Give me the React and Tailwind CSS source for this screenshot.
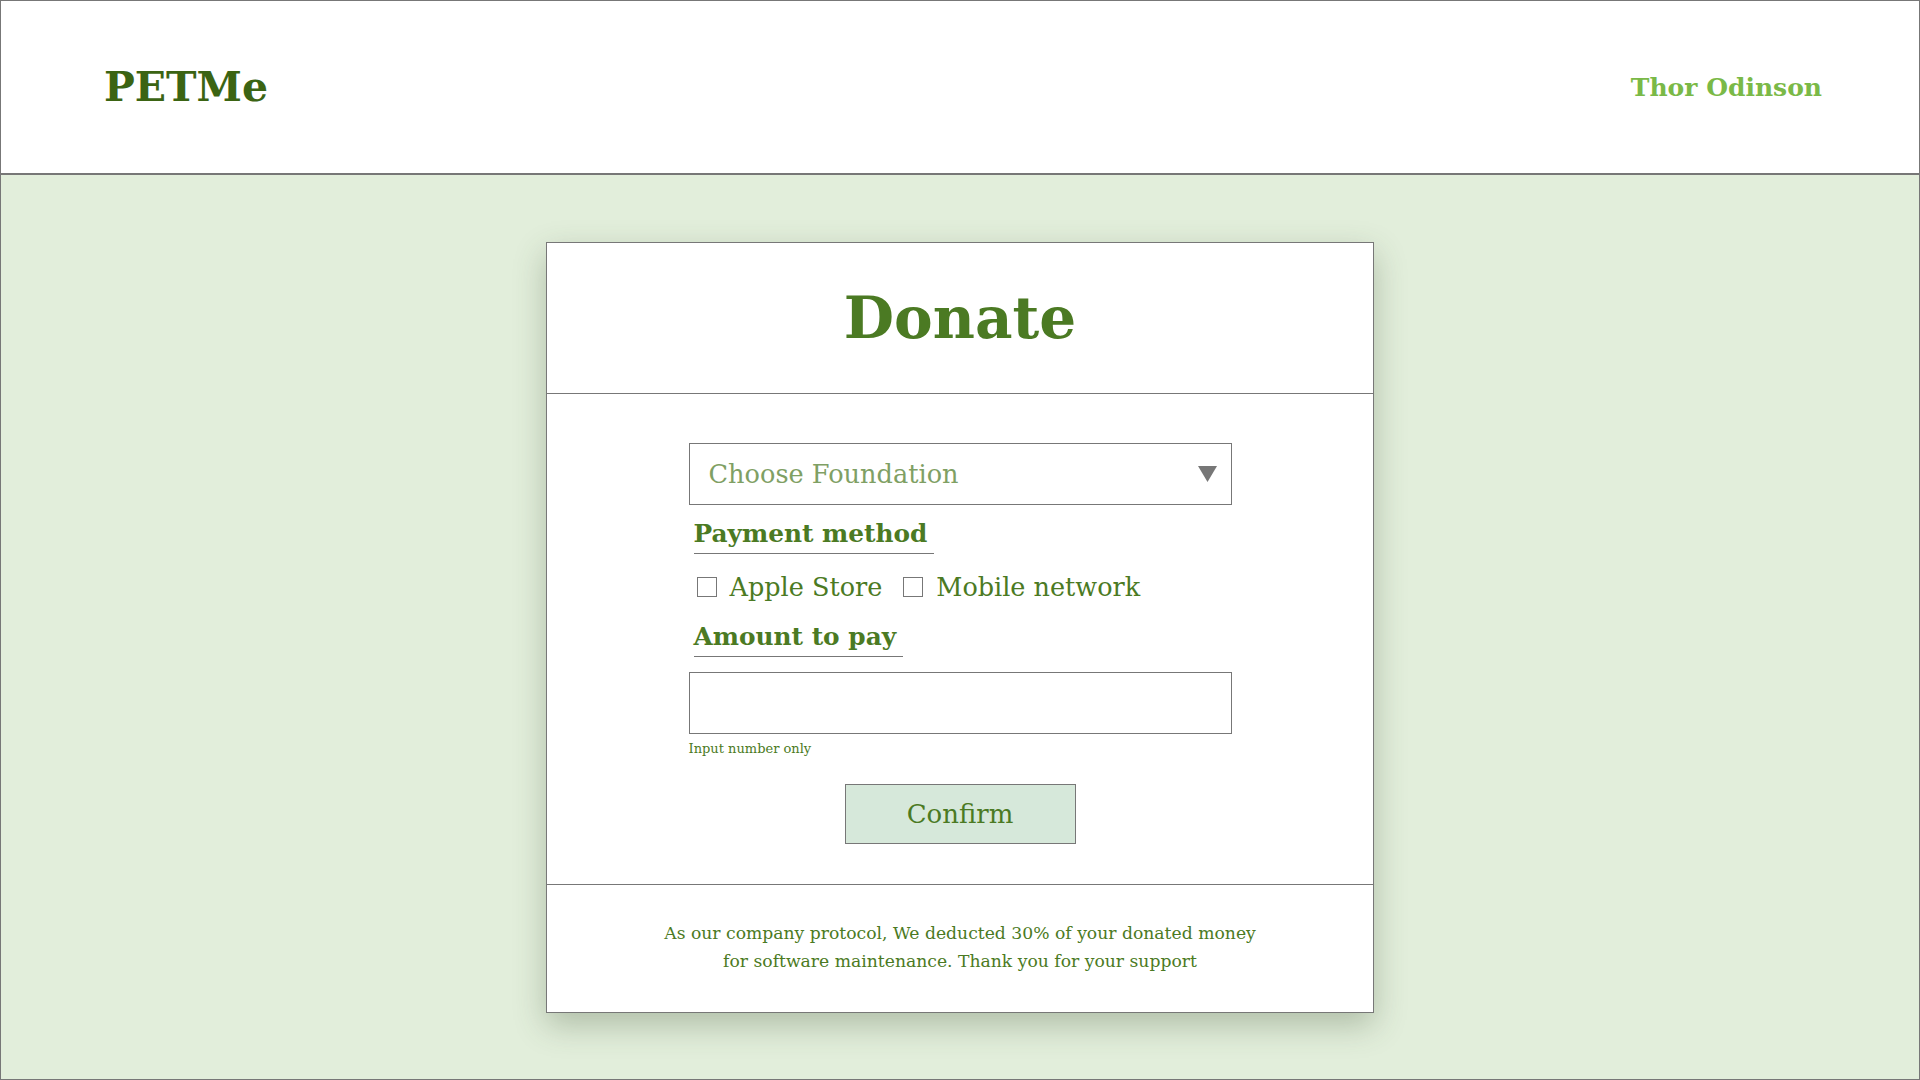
import { useState } from "react";

const serif = "font-['DejaVu_Serif','Liberation_Serif',serif]";

function CheckOption({ label, checked, onToggle }) {
  return (
    <label className="flex items-center gap-[13px] cursor-pointer">
      <span
        onClick={onToggle}
        className="w-[20px] h-[20px] border border-[#777] bg-white flex items-center justify-center"
      >
        {checked && <span className="w-[12px] h-[12px] bg-[#4b7a23]" />}
      </span>
      <span className="text-[25.5px] leading-[34px] text-[#4b7a23]">{label}</span>
    </label>
  );
}

function SectionLabel({ children }) {
  return (
    <div className="self-start ml-[5px] pr-[7px] pb-[2px] border-b border-[#777] text-[24.8px] leading-[34px] font-bold text-[#4b7a23]">
      {children}
    </div>
  );
}

export default function App() {
  const [apple, setApple] = useState(false);
  const [mobile, setMobile] = useState(false);
  const [amount, setAmount] = useState("");

  return (
    <div className={`${serif} w-full h-screen border border-[#777] bg-[#e2eedb] flex flex-col overflow-hidden`}>
      {/* Header */}
      <header className="h-[174px] shrink-0 bg-white border-b-2 border-[#777] flex items-center justify-between pl-[103px] pr-[97px]">
        <div className="text-[41px] font-bold text-[#3b6413] leading-none">PETMe</div>
        <div className="text-[25px] font-bold text-[#7ab947] leading-none">Thor Odinson</div>
      </header>

      {/* Card */}
      <div className="flex justify-center pt-[67px]">
        <div className="w-[828px] bg-white border border-[#777] shadow-[0_12px_30px_rgba(60,80,50,0.3)] flex flex-col">
          <div className="h-[151px] border-b border-[#777] flex items-center justify-center">
            <h1 className="text-[58px] font-bold text-[#4b7a23] leading-none">Donate</h1>
          </div>

          <div className="flex flex-col items-center pt-[49px] pb-[40px] border-b border-[#777]">
            <div className="w-[543px] flex flex-col">
              <div className="h-[62px] border border-[#777] flex items-center justify-between pl-[19px] pr-[14px]">
                <span className="text-[25.6px] text-[#7fa064]">Choose Foundation</span>
                <svg width="19" height="16" viewBox="0 0 19 16">
                  <polygon points="0,0 19,0 9.5,16" fill="#777" />
                </svg>
              </div>

              <div className="mt-[12px] flex">
                <SectionLabel>Payment method</SectionLabel>
              </div>

              <div className="mt-[16px] ml-[8px] flex items-center gap-[21px]">
                <CheckOption label="Apple Store" checked={apple} onToggle={() => setApple(!apple)} />
                <CheckOption label="Mobile network" checked={mobile} onToggle={() => setMobile(!mobile)} />
              </div>

              <div className="mt-[16px] flex">
                <SectionLabel>Amount to pay</SectionLabel>
              </div>

              <input
                value={amount}
                onChange={(e) => setAmount(e.target.value.replace(/[^0-9]/g, ""))}
                className="mt-[15px] h-[62px] border border-[#777] px-[16px] text-[24px] text-[#4b7a23] outline-none"
              />
              <div className="mt-[5px] text-[13px] leading-[20px] text-[#4b7a23]">Input number only</div>

              <div className="mt-[25px] flex justify-center">
                <button className="w-[231px] h-[60px] bg-[#d6e8da] border border-[#777] text-[26px] text-[#4b7a23]">
                  Confirm
                </button>
              </div>
            </div>
          </div>

          <div className="h-[127px] flex items-center justify-center pb-[4px]">
            <p className="text-[17.2px] leading-[28px] text-[#4b7a23] text-center">
              As our company protocol, We deducted 30% of your donated money
              <br />
              for software maintenance. Thank you for your support
            </p>
          </div>
        </div>
      </div>
    </div>
  );
}
